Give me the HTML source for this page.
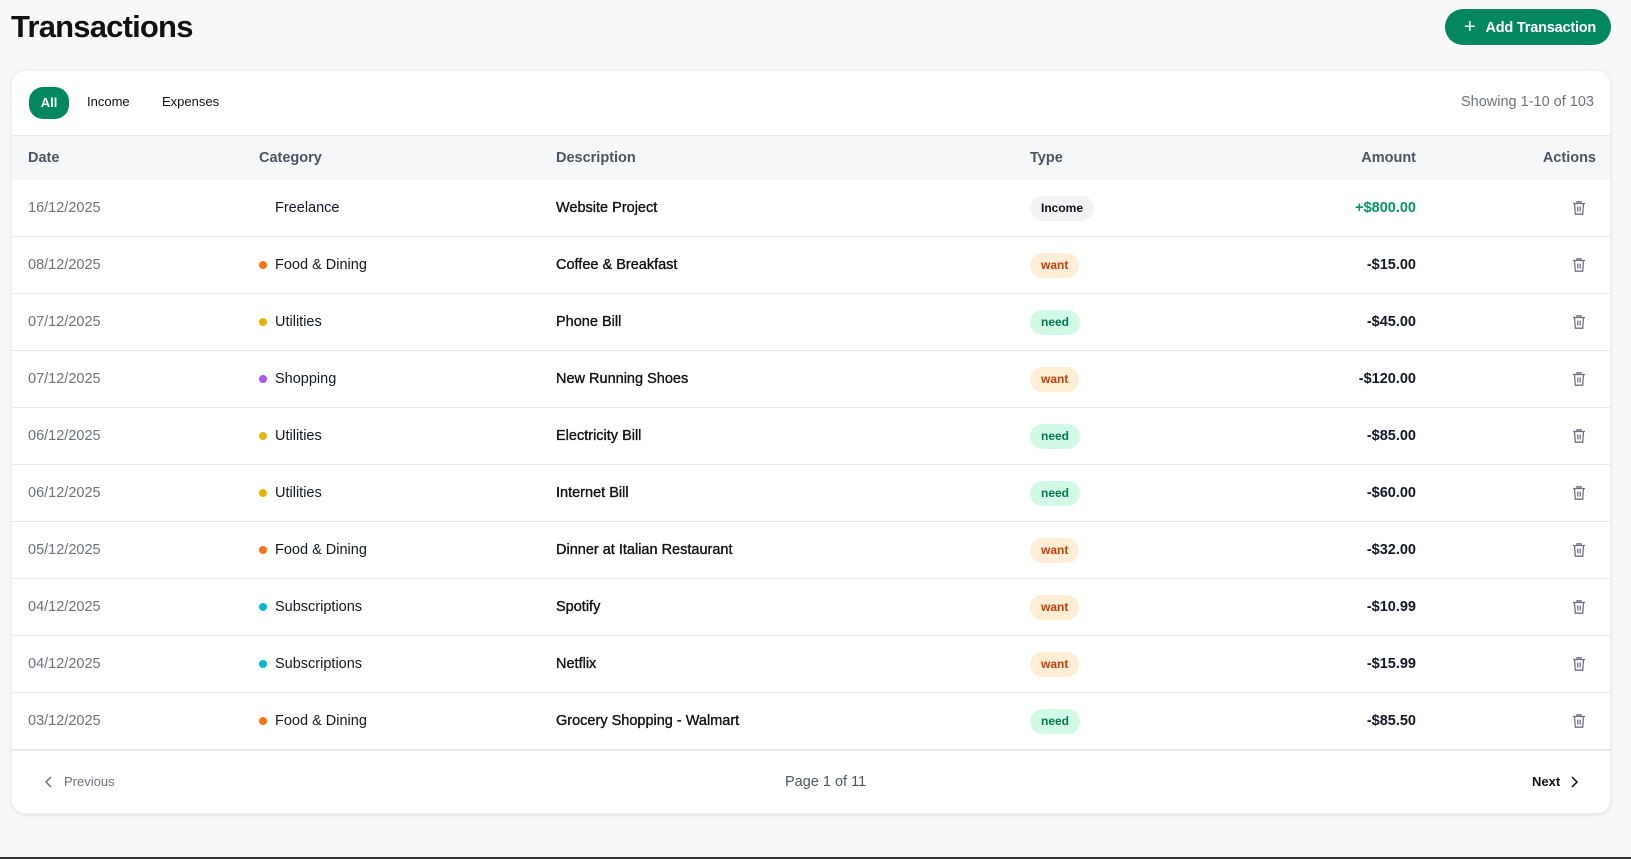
<!DOCTYPE html>
<html><head><meta charset="utf-8"><style>
*{box-sizing:border-box;margin:0;padding:0}
body{width:1631px;height:859px;background:#f7f8fa;font-family:"Liberation Sans",sans-serif;color:#111827;position:relative;overflow:hidden}
.a{position:absolute;white-space:nowrap}
h1{position:absolute;left:11px;top:9px;font-size:31px;font-weight:700;letter-spacing:-0.8px;color:#111}
.btn{position:absolute;left:1445px;top:9px;width:166px;height:36px;background:#03875e;border-radius:18px;color:#fff;font-weight:700;font-size:14.5px;line-height:36px;padding-left:19px;letter-spacing:-0.2px}
.btn span{font-weight:400;font-size:20px;margin-right:10px;vertical-align:-1px}
.card{position:absolute;left:11px;top:70px;width:1600px;height:744px;background:#fff;border-radius:14px;box-shadow:0 1px 3px rgba(0,0,0,.1);border:1px solid #eef0f3;overflow:hidden}
.all{position:absolute;left:17px;top:16px;width:40px;height:32px;background:#03875e;border-radius:14px;color:#fff;font-weight:700;font-size:13px;text-align:center;line-height:32px}
.thead{position:absolute;left:0;top:64px;width:1600px;height:45px;background:#f6f7f9;border-top:1px solid #e5e7eb;font-weight:700;font-size:14.5px;color:#4b5563}
.row{position:absolute;left:0;width:1600px;height:57px;border-bottom:1px solid #e5e7eb;font-size:14.5px}
.row .a{top:0;line-height:56px}
.dot{position:absolute;left:247px;top:24px;width:8px;height:8px;border-radius:50%}
.badge{position:absolute;left:1018px;top:16px;height:25px;line-height:25px;padding:0 11px;border-radius:13px;font-size:12px;font-weight:700}
.want{background:#ffedd5;color:#c2410c}.need{background:#d1fae5;color:#047857}.inc{background:#f1f3f6;color:#111}
.amt{right:196px;font-weight:700;text-align:right}
.desc{-webkit-text-stroke:0.35px #111;color:#111}
svg.t{position:absolute;left:1560px;top:20px}
</style></head><body>
<h1>Transactions</h1>
<div class="btn"><span>+</span>Add Transaction</div>
<div class="card">
<div class="all">All</div>
<div class="a" style="left:75px;top:23px;font-size:13px;color:#111">Income</div>
<div class="a" style="left:150px;top:23px;font-size:13px;color:#111">Expenses</div>
<div class="a" style="right:16px;top:23px;font-size:14.5px;color:#6b7280">Showing 1-10 of 103</div>
<div class="thead">
<div class="a" style="left:16px;top:14px">Date</div>
<div class="a" style="left:247px;top:14px">Category</div>
<div class="a" style="left:544px;top:14px">Description</div>
<div class="a" style="left:1018px;top:14px">Type</div>
<div class="a" style="right:196px;top:14px">Amount</div>
<div class="a" style="right:16px;top:14px">Actions</div>
</div>
<div id="rows"></div>
<div style="position:absolute;left:0;top:679px;width:1600px;height:1px;background:#e5e7eb"></div>
<svg style="position:absolute;left:32px;top:705px" width="10" height="12" viewBox="0 0 10 12"><path d="M7 1L2 6l5 5" fill="none" stroke="#6b7280" stroke-width="1.5"/></svg>
<div class="a" style="left:52px;top:703px;font-size:13px;color:#6b7280">Previous</div>
<div class="a" style="left:773px;top:703px;font-size:14.5px;color:#4b5563">Page 1 of 11</div>
<div class="a" style="left:1520px;top:703px;font-size:13px;color:#111;font-weight:700">Next</div>
<svg style="position:absolute;left:1557px;top:705px" width="10" height="12" viewBox="0 0 10 12"><path d="M3 1l5 5-5 5" fill="none" stroke="#111" stroke-width="1.5"/></svg>
</div>
<script>
const d=[["16/12/2025","","Freelance","Website Project","inc","Income","+$800.00"],
["08/12/2025","#f97316","Food &amp; Dining","Coffee &amp; Breakfast","want","want","-$15.00"],
["07/12/2025","#eab308","Utilities","Phone Bill","need","need","-$45.00"],
["07/12/2025","#a855f7","Shopping","New Running Shoes","want","want","-$120.00"],
["06/12/2025","#eab308","Utilities","Electricity Bill","need","need","-$85.00"],
["06/12/2025","#eab308","Utilities","Internet Bill","need","need","-$60.00"],
["05/12/2025","#f97316","Food &amp; Dining","Dinner at Italian Restaurant","want","want","-$32.00"],
["04/12/2025","#06b6d4","Subscriptions","Spotify","want","want","-$10.99"],
["04/12/2025","#06b6d4","Subscriptions","Netflix","want","want","-$15.99"],
["03/12/2025","#f97316","Food &amp; Dining","Grocery Shopping - Walmart","need","need","-$85.50"]];
let h="";d.forEach((r,i)=>{h+=`<div class="row" style="top:${109+57*i}px">
<div class="a" style="left:16px;color:#6b7280">${r[0]}</div>
${r[1]?`<div class="dot" style="background:${r[1]}"></div>`:""}
<div class="a" style="left:263px">${r[2]}</div>
<div class="a desc" style="left:544px;font-size:14.5px">${r[3]}</div>
<div class="badge ${r[4]}">${r[5]}</div>
<div class="a amt" style="color:${i?"#111827":"#059669"}">${r[6]}</div>
<svg class="t" width="14" height="16" viewBox="0 0 14 16"><path d="M1 3.5h12M5 3.5V1.8h4v1.7M2.5 3.5l.8 10.7h7.4l.8-10.7M5.8 6.5v5M8.2 6.5v5" fill="none" stroke="#6b7280" stroke-width="1.3"/></svg>
</div>`});document.getElementById("rows").innerHTML=h;
</script>
<div style="position:absolute;left:0;top:857px;width:1631px;height:2px;background:#333"></div>
</body></html>
